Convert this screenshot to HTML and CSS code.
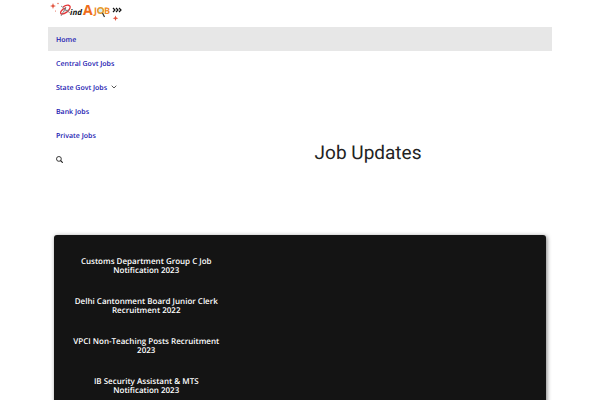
FILE: index.html
```html
<!DOCTYPE html>
<html lang="en">
<head>
    <meta charset="utf-8">
    <meta name="viewport" content="width=device-width, initial-scale=1">
    <title>Find A Job</title>
    <link rel="stylesheet" href="styles.css">
</head>
<body>
    <div class="page">
        <header class="site-header">
            <a href="#" class="logo" aria-label="Find A Job">
                <svg width="76" height="21" viewBox="0 0 76 21">
                    <g fill="#e0523c">
                        <path d="M3 2l.8 2.200 2.200.8-2.200.8L3 8l-.8-2.200L0 5l2.200-.8z"/>
                        <path d="M65.500 14.500l.8 2 2 .8-2 .8-.8 2-.8-2-2-.8 2-.8z"/>
                        <circle cx="8" cy="2.500" r=".7"/>
                        <circle cx="5.500" cy="10" r=".5"/>
                    </g>
                    <path d="M13 6c4-3 8-2 7 1-1 3-5 6-8 6s-1-5 4-6" fill="none" stroke="#e5383b" stroke-width="1.300"/>
                    <path d="M11 15l5-9M14 10l5-1M11 5l9 7" fill="none" stroke="#777" stroke-width=".8"/>
                    <text x="20" y="14" class="logo-ind">ind</text>
                    <text x="33" y="14" class="logo-a">A</text>
                    <text x="44" y="13" class="logo-job">J</text>
                    <circle cx="50.500" cy="9.500" r="2.800" fill="#d5edf2" stroke="#e49a2d" stroke-width="1.500"/>
                    <path d="M52.500 12l2 4" stroke="#333" stroke-width="1.300"/>
                    <text x="54" y="13" class="logo-job">B</text>
                    <path d="M63 7l2 2-2 2M66 7l2 2-2 2M69 7l2 2-2 2" fill="none" stroke="#111" stroke-width="1.200"/>
                </svg>
            </a>
        </header>

        <div class="top">
            <nav class="menu">
                <a href="#" class="active">Home</a>
                <a href="#">Central Govt Jobs</a>
                <a href="#">State Govt Jobs
                    <svg class="arrow" width="6" height="4" viewBox="0 0 6 4"><path d="M.7.7L3 3 5.300.7" fill="none" stroke="#444" stroke-width=".9"/></svg>
                </a>
                <a href="#">Bank Jobs</a>
                <a href="#">Private Jobs</a>
                <button type="button" class="search" aria-label="Search">
                    <svg width="7" height="7" viewBox="0 0 7 7"><circle cx="2.900" cy="2.900" r="2.400" fill="none" stroke="#222" stroke-width=".9"/><path d="M4.500 4.500L6.800 6.800" stroke="#222" stroke-width="1.100"/></svg>
                </button>
            </nav>
            <h1>Job Updates</h1>
        </div>

        <main class="jobs">
            <div class="job-list">
                <h2><a href="#">Customs Department Group C Job Notification 2023</a></h2>
                <h2><a href="#">Delhi Cantonment Board Junior Clerk Recruitment 2022</a></h2>
                <h2><a href="#">VPCI Non-Teaching Posts Recruitment 2023</a></h2>
                <h2><a href="#">IB Security Assistant &amp; MTS Notification 2023</a></h2>
            </div>
        </main>
    </div>
</body>
</html>
```

FILE: styles.css
```css
body {
    margin: 0;
    background-color: white;
    font-family: "Open Sans", sans-serif;
    text-rendering: geometricPrecision;
}
a {
    text-decoration: none;
}
.page {
    padding: 0 8%;
}
.site-header {
    height: 27px;
}
.logo {
    display: inline-block;
    padding: 1px 0 0 2px;
}
.logo svg {
    display: block;
}
.logo-ind {
    font: italic bold 8px "Open Sans", sans-serif;
    fill: #111;
}
.logo-a {
    font: bold 14px "Open Sans", sans-serif;
    fill: #ee6c1b;
}
.logo-job {
    font: bold 9px "Open Sans", sans-serif;
    fill: #f08a24;
}

/* menu and title share one cell */
.top {
    display: grid;
    min-height: 208px;
}
.menu {
    grid-area: 1 / 1;
    display: flex;
    flex-direction: column;
}
.menu a {
    padding: 3px 8px 0;
    font-size: 7px;
    font-weight: 600;
    line-height: 21px;
    color: #1b18b1;
}
.menu a.active {
    background-color: #e7e7e7;
}
.arrow {
    margin-left: 2px;
    vertical-align: 1px;
}
.search {
    align-self: flex-start;
    height: 24px;
    padding: 0 8px;
    border: none;
    background: none;
    cursor: pointer;
}
.search svg {
    display: block;
}
h1 {
    grid-area: 1 / 1;
    align-self: center;
    margin: 44px 0 0 27%;
    font-family: Roboto, sans-serif;
    font-size: 19px;
    font-weight: normal;
    line-height: 24px;
    text-align: center;
    color: #222;
}

.jobs {
    margin: 0 6px;
    min-height: 165px;
    border-radius: 3px;
    background-color: #141414;
    box-shadow: 1px 1px 4px rgba(0, 0, 0, 0.5);
}
.job-list {
    box-sizing: border-box;
    width: 37.5%;
    padding: 22px 18px;
    display: flex;
    flex-direction: column;
    gap: 22px;
}
h2 {
    margin: 0;
    font-size: 8px;
    font-weight: 600;
    line-height: 9px;
    text-align: center;
}
h2 a {
    color: white;
}
```
